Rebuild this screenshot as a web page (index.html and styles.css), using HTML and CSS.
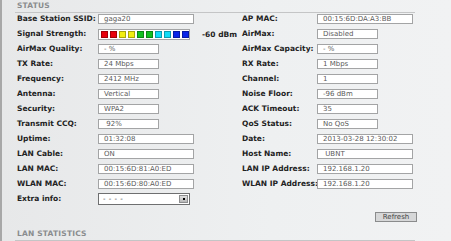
FILE: index.html
```html
<!DOCTYPE html>
<html>
<head>
<meta charset="utf-8">
<link rel="stylesheet" href="styles.css">
</head>
<body>
<div class="frame">
  <div class="page">
    <div class="section-title">STATUS</div>
    <div class="grid">
      <div class="label">Base Station SSID:</div>
      <div class="cell"><span class="box long">gaga20</span></div>
      <div class="label">AP MAC:</div>
      <div class="cell"><span class="box long">00:15:6D:DA:A3:BB</span></div>

      <div class="label">Signal Strength:</div>
      <div class="cell">
        <span class="signal">
          <i class="sq red"></i><i class="sq red"></i><i class="sq yellow"></i><i class="sq yellow"></i><i class="sq green"></i><i class="sq green"></i><i class="sq cyan"></i><i class="sq cyan"></i><i class="sq blue"></i><i class="sq blue"></i>
        </span>
        <span class="dbm">-60 dBm</span>
      </div>
      <div class="label">AirMax:</div>
      <div class="cell"><span class="box short">Disabled</span></div>

      <div class="label">AirMax Quality:</div>
      <div class="cell"><span class="box short">- %</span></div>
      <div class="label">AirMax Capacity:</div>
      <div class="cell"><span class="box short">- %</span></div>

      <div class="label">TX Rate:</div>
      <div class="cell"><span class="box short">24 Mbps</span></div>
      <div class="label">RX Rate:</div>
      <div class="cell"><span class="box short">1 Mbps</span></div>

      <div class="label">Frequency:</div>
      <div class="cell"><span class="box short">2412 MHz</span></div>
      <div class="label">Channel:</div>
      <div class="cell"><span class="box short">1</span></div>

      <div class="label">Antenna:</div>
      <div class="cell"><span class="box short">Vertical</span></div>
      <div class="label">Noise Floor:</div>
      <div class="cell"><span class="box short">-96 dBm</span></div>

      <div class="label">Security:</div>
      <div class="cell"><span class="box short">WPA2</span></div>
      <div class="label">ACK Timeout:</div>
      <div class="cell"><span class="box short">35</span></div>

      <div class="label">Transmit CCQ:</div>
      <div class="cell"><span class="box short">&nbsp;92%</span></div>
      <div class="label">QoS Status:</div>
      <div class="cell"><span class="box short">No QoS</span></div>

      <div class="label">Uptime:</div>
      <div class="cell"><span class="box long">01:32:08</span></div>
      <div class="label">Date:</div>
      <div class="cell"><span class="box long">2013-03-28 12:30:02</span></div>

      <div class="label">LAN Cable:</div>
      <div class="cell"><span class="box long">ON</span></div>
      <div class="label">Host Name:</div>
      <div class="cell"><span class="box long">&nbsp;UBNT</span></div>

      <div class="label">LAN MAC:</div>
      <div class="cell"><span class="box long">00:15:6D:81:A0:ED</span></div>
      <div class="label">LAN IP Address:</div>
      <div class="cell"><span class="box long">192.168.1.20</span></div>

      <div class="label">WLAN MAC:</div>
      <div class="cell"><span class="box long">00:15:6D:80:A0:ED</span></div>
      <div class="label">WLAN IP Address:</div>
      <div class="cell"><span class="box long">192.168.1.20</span></div>

      <div class="label extra">Extra info:</div>
      <div class="cell extra">
        <span class="select"><span class="select-text">- - - -</span><span class="select-btn"><b></b></span></span>
      </div>
    </div>
    <div class="actions"><span class="button">Refresh</span></div>
    <div class="section-title">LAN STATISTICS</div>
  </div>
</div>
</body>
</html>
```

FILE: styles.css
```css
html, body {
  margin: 0;
  padding: 0;
}
body {
  width: 451px;
  height: 241px;
  overflow: hidden;
  background: linear-gradient(to right, #e7e8e9, #eef0f1 60%, #f1f2f3);
  font-family: "DejaVu Sans", Verdana, sans-serif;
  color: #222;
}
.frame {
  height: 241px;
  border-left: 2px solid #a8a8a8;
  box-sizing: border-box;
}
.page {
  margin-left: 13px;
  width: 400px;
}
.section-title {
  height: 13px;
  padding-left: 2px;
  padding-top: 1px;
  box-sizing: border-box;
  border-bottom: 1px solid #c4c5c6;
  font-size: 7.5px;
  font-weight: bold;
  line-height: 10px;
  color: #8a8c8e;
  letter-spacing: 0.2px;
}
.grid {
  display: grid;
  grid-template-columns: 81px 144px 75px 98px;
  grid-auto-rows: 10px;
  row-gap: 5px;
  padding-left: 2px;
  margin-top: 1px;
}
.label {
  font-size: 7.5px;
  font-weight: bold;
  line-height: 10px;
  color: #222;
  white-space: nowrap;
}
.cell {
  display: flex;
  align-items: center;
  height: 10px;
}
.box {
  display: block;
  height: 10px;
  box-sizing: border-box;
  border: 1px solid #a3a4a5;
  background: #fff;
  font-size: 7px;
  line-height: 8px;
  padding-left: 5px;
  color: #5a5a5a;
  white-space: nowrap;
  overflow: hidden;
}
.long { width: 96px; }
.short { width: 61px; }
.signal {
  display: flex;
  align-items: center;
  gap: 2px;
  width: 92px;
  height: 11px;
  box-sizing: border-box;
  border: 1px solid #a3a4a5;
  background: #fff;
  padding-left: 2px;
}
.sq {
  display: block;
  width: 7px;
  height: 7px;
  box-sizing: border-box;
  border: 1px solid rgba(0,0,0,0.3);
}
.red { background: #e8000c; }
.yellow { background: #f2ee10; }
.green { background: #12c020; }
.cyan { background: #10dcf8; }
.blue { background: #0a26e8; }
.dbm {
  margin-left: 12px;
  font-size: 7.5px;
  font-weight: bold;
  color: #222;
  white-space: nowrap;
}
.extra {
  height: 12px;
  margin-top: -1px;
}
.label.extra {
  line-height: 12px;
}
.select {
  display: flex;
  align-items: center;
  width: 92px;
  height: 12px;
  box-sizing: border-box;
  border: 1px solid #6e6f70;
  background: #fff;
  padding: 1px;
}
.select-text {
  flex: 1;
  font-size: 7px;
  line-height: 8px;
  padding-left: 3px;
  color: #333;
  letter-spacing: 0.5px;
}
.select-btn {
  width: 9px;
  height: 8px;
  box-sizing: border-box;
  border: 1px solid #8d8e8f;
  background: linear-gradient(#e0e0e0, #b8b8b8);
  display: flex;
  align-items: center;
  justify-content: center;
}
.select-btn b {
  display: block;
  width: 2px;
  height: 2px;
  background: #000;
}
.actions {
  display: flex;
  justify-content: flex-end;
  margin-top: 8px;
  height: 16px;
}
.button {
  display: block;
  width: 42px;
  height: 10px;
  box-sizing: border-box;
  border: 1px solid #8a8b8c;
  background: #d6d7d8;
  font-size: 7px;
  line-height: 8px;
  text-align: center;
  color: #444;
  margin-right: -2px;
}
```
